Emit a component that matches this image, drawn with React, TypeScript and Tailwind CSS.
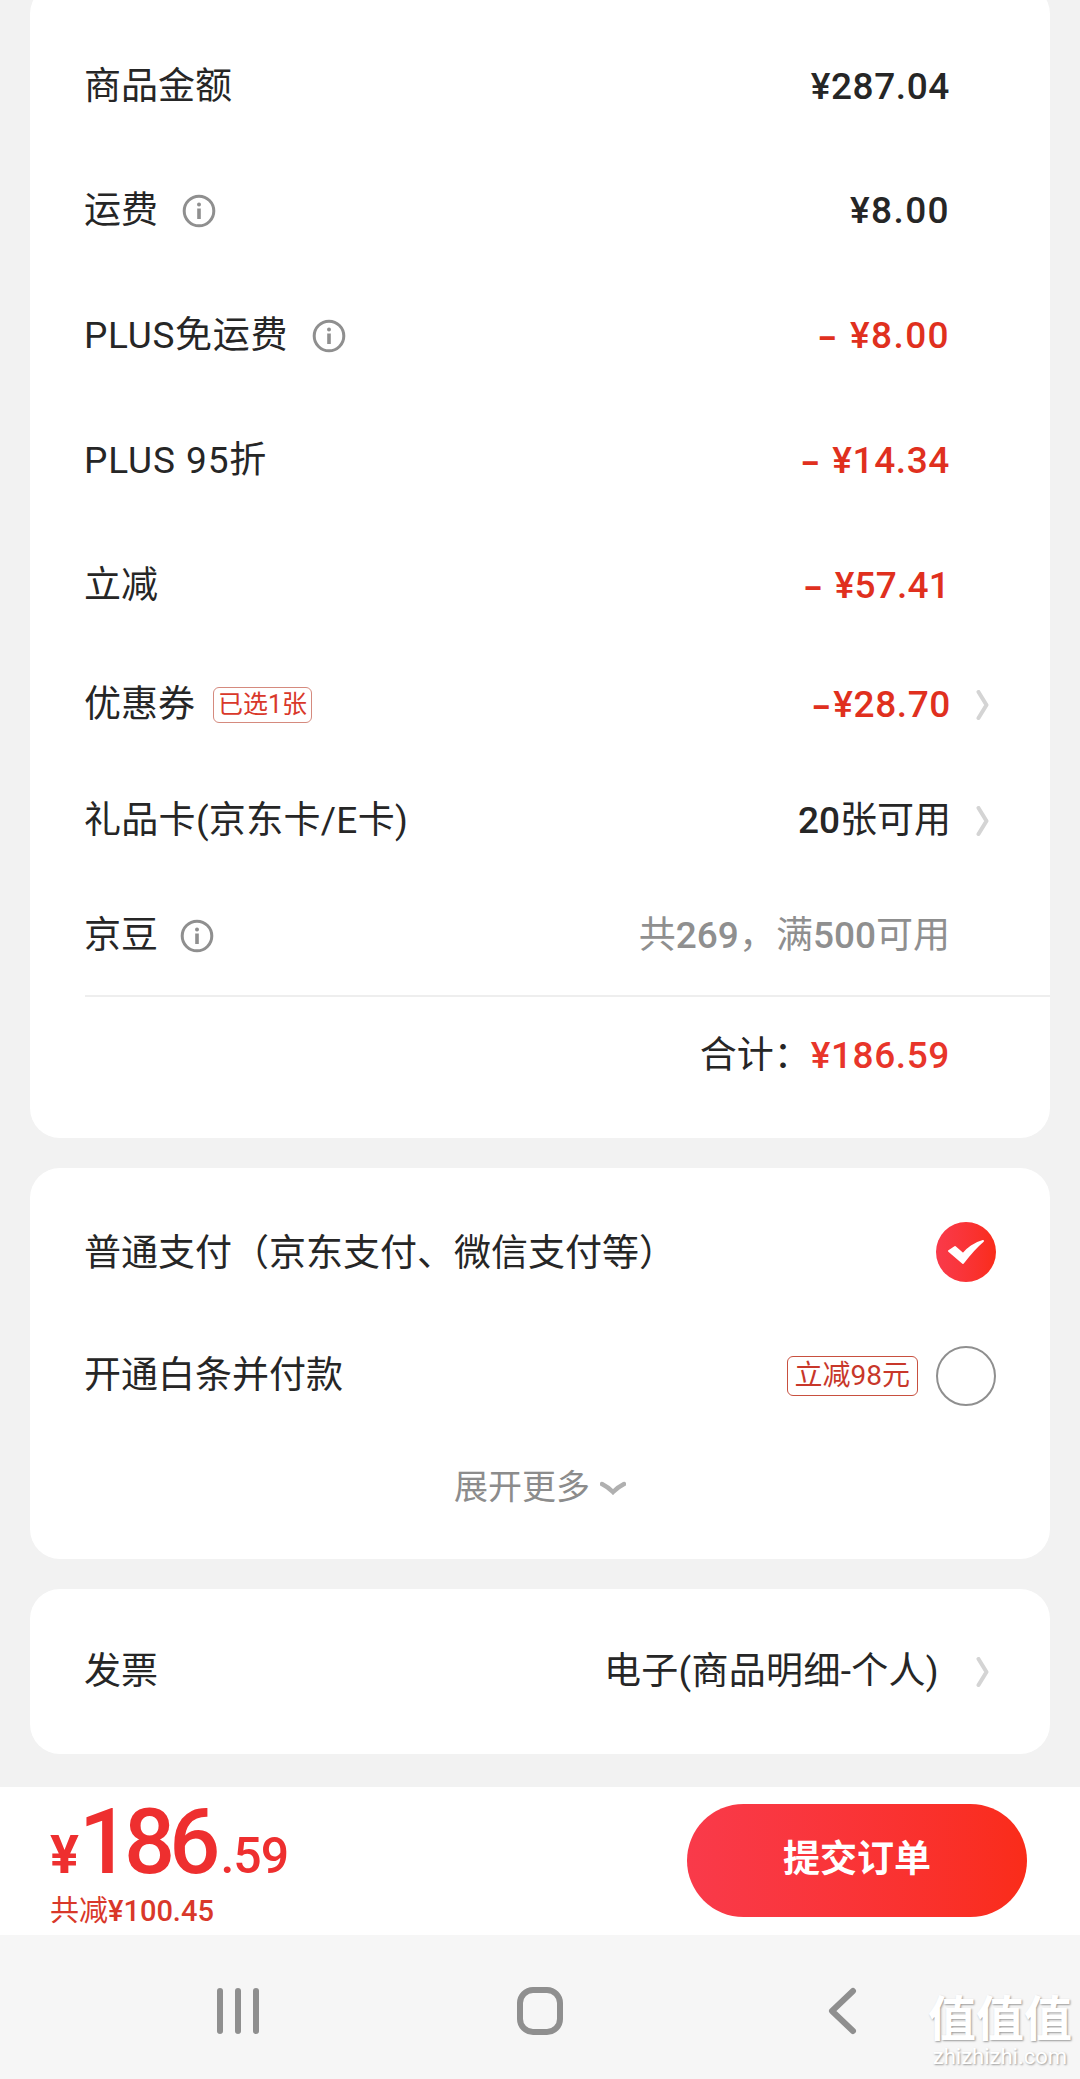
function InfoIcon() {
  return (
    <svg width="34" height="34" viewBox="0 0 34 34" className="shrink-0">
      <circle cx="17" cy="17" r="14.8" fill="none" stroke="#8f8f8f" strokeWidth="3" />
      <circle cx="17" cy="10.5" r="2" fill="#8f8f8f" />
      <rect x="15.2" y="14.5" width="3.6" height="10.5" fill="#8f8f8f" />
    </svg>
  )
}

function Chevron() {
  return (
    <svg width="13" height="30" viewBox="0 0 13 30" className="shrink-0">
      <path d="M2.5 2 L10.5 15 L2.5 28" fill="none" stroke="#d4d4d4" strokeWidth="4" strokeLinecap="round" strokeLinejoin="round" />
    </svg>
  )
}

const FEE_ROWS = [
  { label: '商品金额', amount: '¥287.04', minus: false, color: 'text-[#262626]', info: false, height: 'h-[124px]', tracking: '', amountTracking: 'tracking-[0.6px]' },
  { label: '运费', amount: '¥8.00', minus: false, color: 'text-[#262626]', info: true, height: 'h-[124px]', tracking: '', amountTracking: 'tracking-[1.4px]' },
  { label: 'PLUS免运费', amount: '¥8.00', minus: true, color: 'text-[#e0301e]', info: true, height: 'h-[125px]', tracking: 'tracking-[0.7px]', amountTracking: 'tracking-[1.4px]' },
  { label: 'PLUS 95折', amount: '¥14.34', minus: true, color: 'text-[#e0301e]', info: false, height: 'h-[125px]', tracking: 'tracking-[0.9px]', amountTracking: 'tracking-[0.6px]' },
  { label: '立减', amount: '¥57.41', minus: true, color: 'text-[#e0301e]', info: false, height: 'h-[125px]', tracking: '', amountTracking: 'tracking-[0.2px]' },
]

export default function App() {
  return (
    <div className="relative h-[2079px] w-[1080px] overflow-hidden bg-[#f2f2f2] font-['Roboto','Noto_Sans_CJK_SC',sans-serif] text-[37px] text-[#262626]">
      <div className="flex h-[1787px] flex-col gap-[30px] px-[30px]">
        {/* Fee breakdown */}
        <section className="mt-[-16px] rounded-[30px] bg-white pt-[41px]">
          {FEE_ROWS.map(row => (
            <div key={row.label} className={`flex items-center justify-between pl-[54px] pr-[100px] ${row.height}`}>
              <div className="flex items-center gap-[24px]">
                <span className={row.tracking}>{row.label}</span>
                {row.info && <InfoIcon />}
              </div>
              <span className={`font-medium ${row.amountTracking} ${row.color}`}>
                {row.minus && <span className="mr-[13px] text-[29px] font-black">–</span>}
                {row.amount}
              </span>
            </div>
          ))}

          <div className="flex h-[114px] items-center justify-between pl-[54px] pr-[61px]">
            <div className="flex items-center gap-[18px]">
              <span>优惠券</span>
              <span className="flex h-[36px] items-center rounded-[6px] border border-[#d58a7e] px-[4px] text-[25px] text-[#d9382a]">已选1张</span>
            </div>
            <div className="flex items-center gap-[25px]">
              <span className="font-medium tracking-[0.6px] text-[#e0301e]"><span className="mr-[3px] text-[29px] font-black">–</span>¥28.70</span>
              <Chevron />
            </div>
          </div>

          <div className="flex h-[118px] items-center justify-between pl-[54px] pr-[61px]">
            <span className="tracking-[0.3px]">礼品卡(京东卡/E卡)</span>
            <div className="flex items-center gap-[25px]">
              <span><span className="font-medium">20</span>张可用</span>
              <Chevron />
            </div>
          </div>

          <div className="flex h-[115px] items-center justify-between pb-[3px] pl-[54px] pr-[100px]">
            <div className="flex items-center gap-[22px]">
              <span>京豆</span>
              <InfoIcon />
            </div>
            <span className="text-[#8f8f8f]">共<span className="font-medium">269</span>，满<span className="font-medium">500</span>可用</span>
          </div>

          <div className="ml-[55px] border-t-2 border-[#eeeeee]" />

          <div className="flex h-[118px] items-center justify-end pr-[100px]">
            <span>合计：</span>
            <span className="font-medium tracking-[0.6px] text-[#e8352a]">¥186.59</span>
          </div>
          <div className="h-[23px]" />
        </section>

        {/* Payment method */}
        <section className="rounded-[30px] bg-white">
          <div className="flex h-[168px] items-center justify-between pl-[54px] pr-[54px]">
            <span className="mt-[4px]">普通支付（京东支付、微信支付等）</span>
            <span className="flex h-[60px] w-[60px] items-center justify-center rounded-full bg-gradient-to-r from-[#f93a4a] to-[#fa2c19]">
              <svg width="38" height="30" viewBox="0 0 38 30">
                <path d="M2 14 L8 10 L16 17 C20 12 28 6 36 4 C29 10 22 18 16 26 Z" fill="#fff" stroke="#fff" strokeWidth="2" strokeLinejoin="round" />
              </svg>
            </span>
          </div>
          <div className="flex h-[80px] items-center justify-between pl-[54px] pr-[54px]">
            <span>开通白条并付款</span>
            <div className="flex items-center gap-[18px]">
              <span className="flex h-[40px] items-center rounded-[6px] border border-[#c8503f] px-[7px] text-[28px] text-[#c8372a]">立减98元</span>
              <span className="h-[60px] w-[60px] rounded-full border-2 border-[#8f8f8f]" />
            </div>
          </div>
          <div className="flex h-[143px] items-center justify-center gap-[10px] text-[34px] text-[#8c8c8c]">
            <span>展开更多</span>
            <svg width="26" height="14" viewBox="0 0 26 14">
              <path d="M2 3 C8 6 11 9 13 11 C15 9 18 6 24 3" fill="none" stroke="#b0b0b0" strokeWidth="4.5" strokeLinecap="round" />
            </svg>
          </div>
        </section>

        {/* Invoice */}
        <section className="flex h-[165px] items-center justify-between rounded-[30px] bg-white pl-[54px] pr-[61px]">
          <span>发票</span>
          <div className="flex items-center gap-[37px]">
            <span className="tracking-[0.3px]">电子(商品明细-个人)</span>
            <Chevron />
          </div>
        </section>
      </div>

      {/* Checkout bar */}
      <div className="flex h-[148px] items-center justify-between bg-white pb-[2px] pl-[50px] pr-[53px]">
        <div className="flex flex-col self-start pt-[16px] text-[#ee2f2f]">
          <div className="flex h-[90px] items-baseline">
            <span className="text-[54px] font-bold leading-[80px]">¥</span>
            <span className="text-[90px] font-medium leading-[80px] tracking-[-6px]">186</span>
            <span className="ml-[6px] text-[50px] font-medium leading-[80px] tracking-[-1px]">.59</span>
          </div>
          <div className="text-[29px] leading-[36px] text-[#d9382a]">共减<span className="font-medium">¥100.45</span></div>
        </div>
        <button className="h-[113px] w-[340px] rounded-full bg-gradient-to-r from-[#f93a4a] to-[#fa2c19] text-[37px] font-bold text-white">提交订单</button>
      </div>

      {/* System nav */}
      <div className="grid h-[144px] grid-cols-3 items-center bg-[#f6f6f6] px-[87px] pt-[8px]">
        <div className="flex justify-center gap-[12px]">
          <span className="h-[46px] w-[6px] rounded-full bg-[#8f8f8f]" />
          <span className="h-[46px] w-[6px] rounded-full bg-[#8f8f8f]" />
          <span className="h-[46px] w-[6px] rounded-full bg-[#8f8f8f]" />
        </div>
        <div className="flex justify-center">
          <span className="h-[48px] w-[46px] rounded-[16px] border-[6px] border-[#8f8f8f]" />
        </div>
        <div className="flex justify-center">
          <svg width="32" height="48" viewBox="0 0 32 48">
            <path d="M27 4 L6 24 L27 44" fill="none" stroke="#8f8f8f" strokeWidth="6" strokeLinecap="round" strokeLinejoin="round" />
          </svg>
        </div>
      </div>

      {/* Watermark */}
      <div className="absolute bottom-[10px] right-[8px] flex flex-col items-center text-white [text-shadow:1px_1px_2px_#9a9a9a]">
        <span className="text-[48px] font-bold leading-[50px]">值值值</span>
        <span className="text-[22px] leading-[24px]">zhizhizhi.com</span>
      </div>
    </div>
  )
}
